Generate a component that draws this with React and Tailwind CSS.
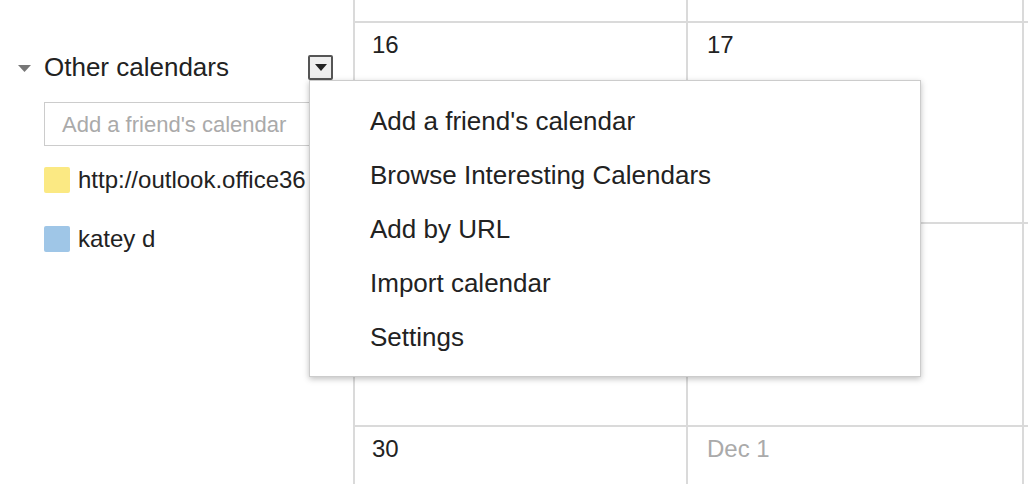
import React from 'react';

const menuItems = [
    "Add a friend's calendar",
    'Browse Interesting Calendars',
    'Add by URL',
    'Import calendar',
    'Settings',
];

const calendars = [
    { name: 'http://outlook.office365.com/owa/calendar', color: 'bg-[#fbe983]' },
    { name: 'katey d', color: 'bg-[#9fc6e7]' },
];

const Cell = ({ label, muted, top, className = '' }) => (
    <div className={`border-l-2 border-[#dadada] ${top ? '' : 'border-t-2'} ${className}`}>
        {label && (
            <div className={`pt-[8px] text-[24px] leading-[28px] ${muted ? 'text-[#aaa]' : 'text-[#222]'}`}>
                {label}
            </div>
        )}
    </div>
);

const App = () => {
    return (
        <div className="relative flex h-[484px] w-[1028px] overflow-hidden bg-white font-['Liberation_Sans',Arial,sans-serif]">
            {/* Sidebar */}
            <div className="w-[353px] shrink-0 pt-[52px]">
                <div className="flex h-[30px] items-center">
                    <svg width="13" height="7" viewBox="0 0 13 7" className="ml-[18px] mt-[3px]">
                        <path d="M0 0 H13 L6.5 7 Z" fill="#777" />
                    </svg>
                    <span className="ml-[13px] text-[26px] leading-[30px] text-[#222]">Other calendars</span>
                    <div className="ml-auto mr-[20px] flex h-[25px] w-[25px] items-center justify-center rounded-[2px] border-2 border-[#555] bg-[#eee]">
                        <svg width="12" height="7" viewBox="0 0 12 7">
                            <path d="M0 0 H12 L6 7 Z" fill="#222" />
                        </svg>
                    </div>
                </div>

                <div className="ml-[44px] mt-[20px] flex h-[44px] w-[290px] items-center border border-[#ccc] px-[17px] text-[22px] text-[#aaa]">
                    Add a friend's calendar
                </div>

                <div className="mt-[21px] flex w-[262px] flex-col gap-[33px] ml-[44px]">
                    {calendars.map(cal => (
                        <div key={cal.name} className="flex h-[26px] items-center gap-[8px] overflow-hidden whitespace-nowrap">
                            <div className={`h-[26px] w-[26px] shrink-0 rounded-[2px] ${cal.color}`} />
                            <span className="overflow-hidden text-[24px] leading-[26px] text-[#222]">{cal.name}</span>
                        </div>
                    ))}
                </div>
            </div>

            {/* Month grid */}
            <div className="grid flex-1 grid-cols-[333px_336px_1fr] grid-rows-[21px_201px_203px_1fr]">
                <Cell top />
                <Cell top />
                <Cell top />

                <Cell label="16" className="pl-[17px]" />
                <Cell label="17" className="pl-[19px]" />
                <Cell />

                <Cell />
                <Cell />
                <Cell />

                <Cell label="30" className="pl-[17px]" />
                <Cell label="Dec 1" muted className="pl-[19px]" />
                <Cell />
            </div>

            {/* Dropdown menu */}
            <div className="absolute left-[309px] top-[80px] h-[297px] w-[612px] border border-[#ccc] bg-white pt-[13px] shadow-[0_2px_6px_rgba(0,0,0,0.25)]">
                {menuItems.map(item => (
                    <div key={item} className="flex h-[54px] items-center pl-[60px] text-[26px] text-[#222]">
                        {item}
                    </div>
                ))}
            </div>
        </div>
    );
};

export default App;
